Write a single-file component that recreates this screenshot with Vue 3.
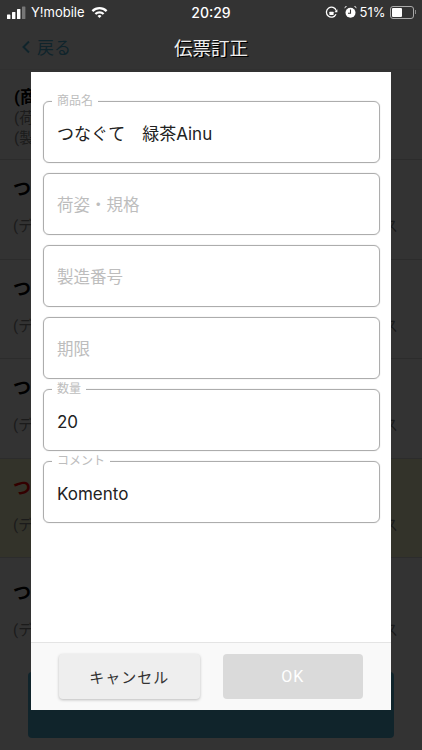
<template>
  <div class="page">
    <header class="status">
      <div class="status-left">
        <svg class="signal" width="19" height="13" viewBox="0 0 19 13">
          <rect x="0" y="8.5" width="3.4" height="4.5" rx="0.6" fill="#fff" />
          <rect x="5" y="6" width="3.4" height="7" rx="0.6" fill="#fff" />
          <rect x="10" y="3" width="3.4" height="10" rx="0.6" fill="#fff" />
          <rect x="15" y="0.5" width="3.4" height="12.5" rx="0.6" fill="#777" />
        </svg>
        <span>Y!mobile</span>
        <svg class="wifi" width="17" height="12" viewBox="0 0 17 12">
          <path d="M0.6 4.2a11.2 11.2 0 0 1 15.8 0l-1.6 1.7a8.9 8.9 0 0 0-12.6 0z" fill="#fff" />
          <path d="M3.6 7.2a7 7 0 0 1 9.8 0l-1.6 1.6a4.7 4.7 0 0 0-6.6 0z" fill="#fff" />
          <path d="M6.5 10a2.8 2.8 0 0 1 4 0l-2 2z" fill="#fff" />
        </svg>
      </div>
      <div class="clock">20:29</div>
      <div class="status-right">
        <svg width="13" height="13" viewBox="0 0 13 13">
          <path d="M11 8.2A5 5 0 1 1 11.2 4.6" fill="none" stroke="#fff" stroke-width="1.3" />
          <path d="M12.4 3.2v3h-3z" fill="#fff" />
          <rect x="4.4" y="5.8" width="4.2" height="3.2" rx="0.5" fill="#fff" />
        </svg>
        <svg class="alarm" width="13" height="14" viewBox="0 0 13 14">
          <circle cx="6.5" cy="7.8" r="5" fill="#fff" />
          <path d="M0.6 3.6 3 1.1a2 2 0 0 0-2.4 2.5zM12.4 3.6 10 1.1a2 2 0 0 1 2.4 2.5z" fill="#fff" />
          <path d="M6.5 4.6v3.6H4" fill="none" stroke="#333" stroke-width="1.1" />
        </svg>
        <span class="percent">51%</span>
        <div class="battery"><div class="battery-level" :style="{ width: battery + '%' }"></div></div>
        <div class="battery-cap"></div>
      </div>
    </header>

    <nav class="nav">
      <span class="back">
        <svg width="10" height="14" viewBox="0 0 10 14">
          <path d="M8 1.5 2.5 7 8 12.5" fill="none" stroke="#50b4d7" stroke-width="2" />
        </svg>
        戻る
      </span>
      <span class="nav-title">伝票訂正</span>
    </nav>

    <section class="list">
      <div class="list-head">
        <div class="head-name">(商品名)</div>
        <div class="head-sub">(荷姿・規格)</div>
        <div class="head-sub">(製造番号)</div>
      </div>
      <div v-for="row in rows" :key="row.id" class="row" :class="{ warn: row.warn }">
        <div class="row-name">つなぐて　緑茶Ainu</div>
        <div class="row-sub"><span>(デフォルト)</span><span>ス</span></div>
      </div>
    </section>

    <div class="bottom"><div class="bottom-btn"></div></div>

    <div class="scrim"></div>
    <span class="ghost-title">伝票訂正</span>

    <div class="modal">
      <div class="form">
        <label v-for="f in fields" :key="f.label" class="field" :class="{ empty: !f.value }">
          <span v-if="f.value" class="legend">{{ f.label }}</span>
          <input type="text" :value="f.value" :placeholder="f.value ? '' : f.label" />
        </label>
      </div>
      <div class="actions">
        <button class="btn cancel">キャンセル</button>
        <button class="btn ok">OK</button>
      </div>
    </div>
  </div>
</template>

<script setup>
const battery = 51;

const rows = [
  { id: 1 },
  { id: 2 },
  { id: 3 },
  { id: 4, warn: true },
  { id: 5 },
];

const fields = [
  { label: "商品名", value: "つなぐて　緑茶Ainu" },
  { label: "荷姿・規格", value: "" },
  { label: "製造番号", value: "" },
  { label: "期限", value: "" },
  { label: "数量", value: "20" },
  { label: "コメント", value: "Komento" },
];
</script>

<style>
html,
body {
  margin: 0;
  background: #333;
}
</style>

<style scoped>
.page {
  position: relative;
  width: 422px;
  height: 750px;
  overflow: hidden;
  display: flex;
  flex-direction: column;
  background: #fff;
  font-family: Roboto, "Noto Sans CJK JP", sans-serif;
  color: #000;
}

.status {
  position: relative;
  z-index: 3;
  height: 24px;
  flex: none;
  display: flex;
  align-items: center;
  justify-content: space-between;
  padding: 0 6px 0 7px;
  color: #fff;
  font-family: Inter, "Liberation Sans", sans-serif;
  font-size: 13px;
}

.status-left,
.status-right {
  display: flex;
  align-items: center;
  gap: 5px;
}

.status-right {
  gap: 6px;
}

.wifi {
  margin-left: 1px;
}

.percent {
  margin-left: -3px;
}

.clock {
  position: absolute;
  left: 0;
  right: 0;
  text-align: center;
  font-size: 14px;
  font-weight: 500;
}

.battery {
  width: 20px;
  height: 9px;
  border: 1px solid #aaa;
  border-radius: 3px;
  padding: 1px;
  margin-left: -2px;
  box-sizing: content-box;
}

.battery-level {
  height: 100%;
  background: #fff;
  border-radius: 1px;
}

.battery-cap {
  width: 1.5px;
  height: 4px;
  background: #888;
  margin-left: -5px;
}

.nav {
  position: relative;
  height: 46px;
  flex: none;
  display: flex;
  align-items: center;
  padding-left: 21px;
  border-bottom: 1px solid #eee;
  box-sizing: border-box;
}

.back {
  display: flex;
  align-items: center;
  gap: 6px;
  color: #50b4d7;
  font-size: 17px;
}

.nav-title {
  position: absolute;
  left: 0;
  right: 0;
  top: 14px;
  text-align: center;
  font-size: 18.5px;
  line-height: 24px;
  padding-left: 3px;
}

.list {
  flex: 1;
  min-height: 0;
}

.list-head {
  height: 90px;
  box-sizing: border-box;
  padding: 16px 14px 0;
  border-bottom: 1px solid #ddd;
}

.head-name {
  font-size: 17px;
  font-weight: 700;
  line-height: 22px;
}

.head-sub {
  font-size: 15px;
  line-height: 20px;
  color: #888;
}

.row {
  height: 99.5px;
  box-sizing: border-box;
  padding: 17px 13px 0;
  border-bottom: 1px solid #ddd;
}

.row:last-child {
  padding-top: 23px;
  border-bottom: 0;
}

.row.warn {
  background: #ffffd0;
}

.row.warn .row-name {
  color: #f00;
}

.row-name {
  font-size: 18px;
  font-weight: 700;
  line-height: 24px;
}

.row-sub {
  display: flex;
  justify-content: space-between;
  margin-top: 15px;
  padding-right: 11px;
  font-size: 15px;
  line-height: 20px;
  color: #888;
}

.bottom {
  flex: none;
  height: 90px;
  box-sizing: border-box;
  padding: 12px 28px;
}

.bottom-btn {
  height: 66px;
  background: #50b4d7;
  border-radius: 4px;
}

.scrim {
  position: absolute;
  inset: 0;
  z-index: 1;
  background: rgba(0, 0, 0, 0.8);
}

.ghost-title {
  position: absolute;
  z-index: 2;
  left: 0;
  right: 0;
  top: 37px;
  text-align: center;
  color: #eee;
  font-size: 18.5px;
  line-height: 24px;
}

.modal {
  position: absolute;
  z-index: 2;
  left: 31px;
  top: 72px;
  width: 360px;
  height: 638px;
  display: flex;
  flex-direction: column;
  background: #fff;
}

.form {
  flex: 1;
  display: flex;
  flex-direction: column;
  gap: 10px;
  padding: 29px 11px 0 12px;
}

.field {
  position: relative;
  display: flex;
  align-items: center;
  height: 62px;
  padding: 3px 13px 0;
  box-sizing: border-box;
  border: 1px solid #adadad;
  border-radius: 6px;
  box-shadow: 0 0 1px rgba(0, 0, 0, 0.3);
}

.field.empty {
  padding-top: 1px;
}

.legend {
  position: absolute;
  left: 8px;
  top: -7px;
  padding: 0 5px;
  font-size: 12px;
  line-height: 12px;
  color: #bdbdbd;
  background: #fff;
}

.field input {
  display: block;
  width: 100%;
  padding: 0;
  border: 0;
  outline: 0;
  background: transparent;
  font: inherit;
  font-family: Inter, "Noto Sans CJK JP", sans-serif;
  font-size: 17px;
  line-height: 24px;
  color: #222;
}

.field input::placeholder {
  color: #bdbdbd;
  opacity: 1;
  font-size: 16.5px;
}

.actions {
  flex: none;
  height: 68px;
  box-sizing: border-box;
  display: flex;
  gap: 23px;
  padding: 11px 28px;
  background: #f9f9f9;
  border-top: 1px solid #e4e4e4;
}

.btn {
  width: 141px;
  height: 45px;
  border: 0;
  border-radius: 4px;
  font-family: inherit;
  font-size: 15px;
  letter-spacing: 1px;
}

.cancel {
  background: #eee;
  color: #333;
  box-shadow: 0 1px 3px rgba(0, 0, 0, 0.25);
}

.ok {
  background: #dadada;
  color: #fff;
  font-size: 16px;
}
</style>
